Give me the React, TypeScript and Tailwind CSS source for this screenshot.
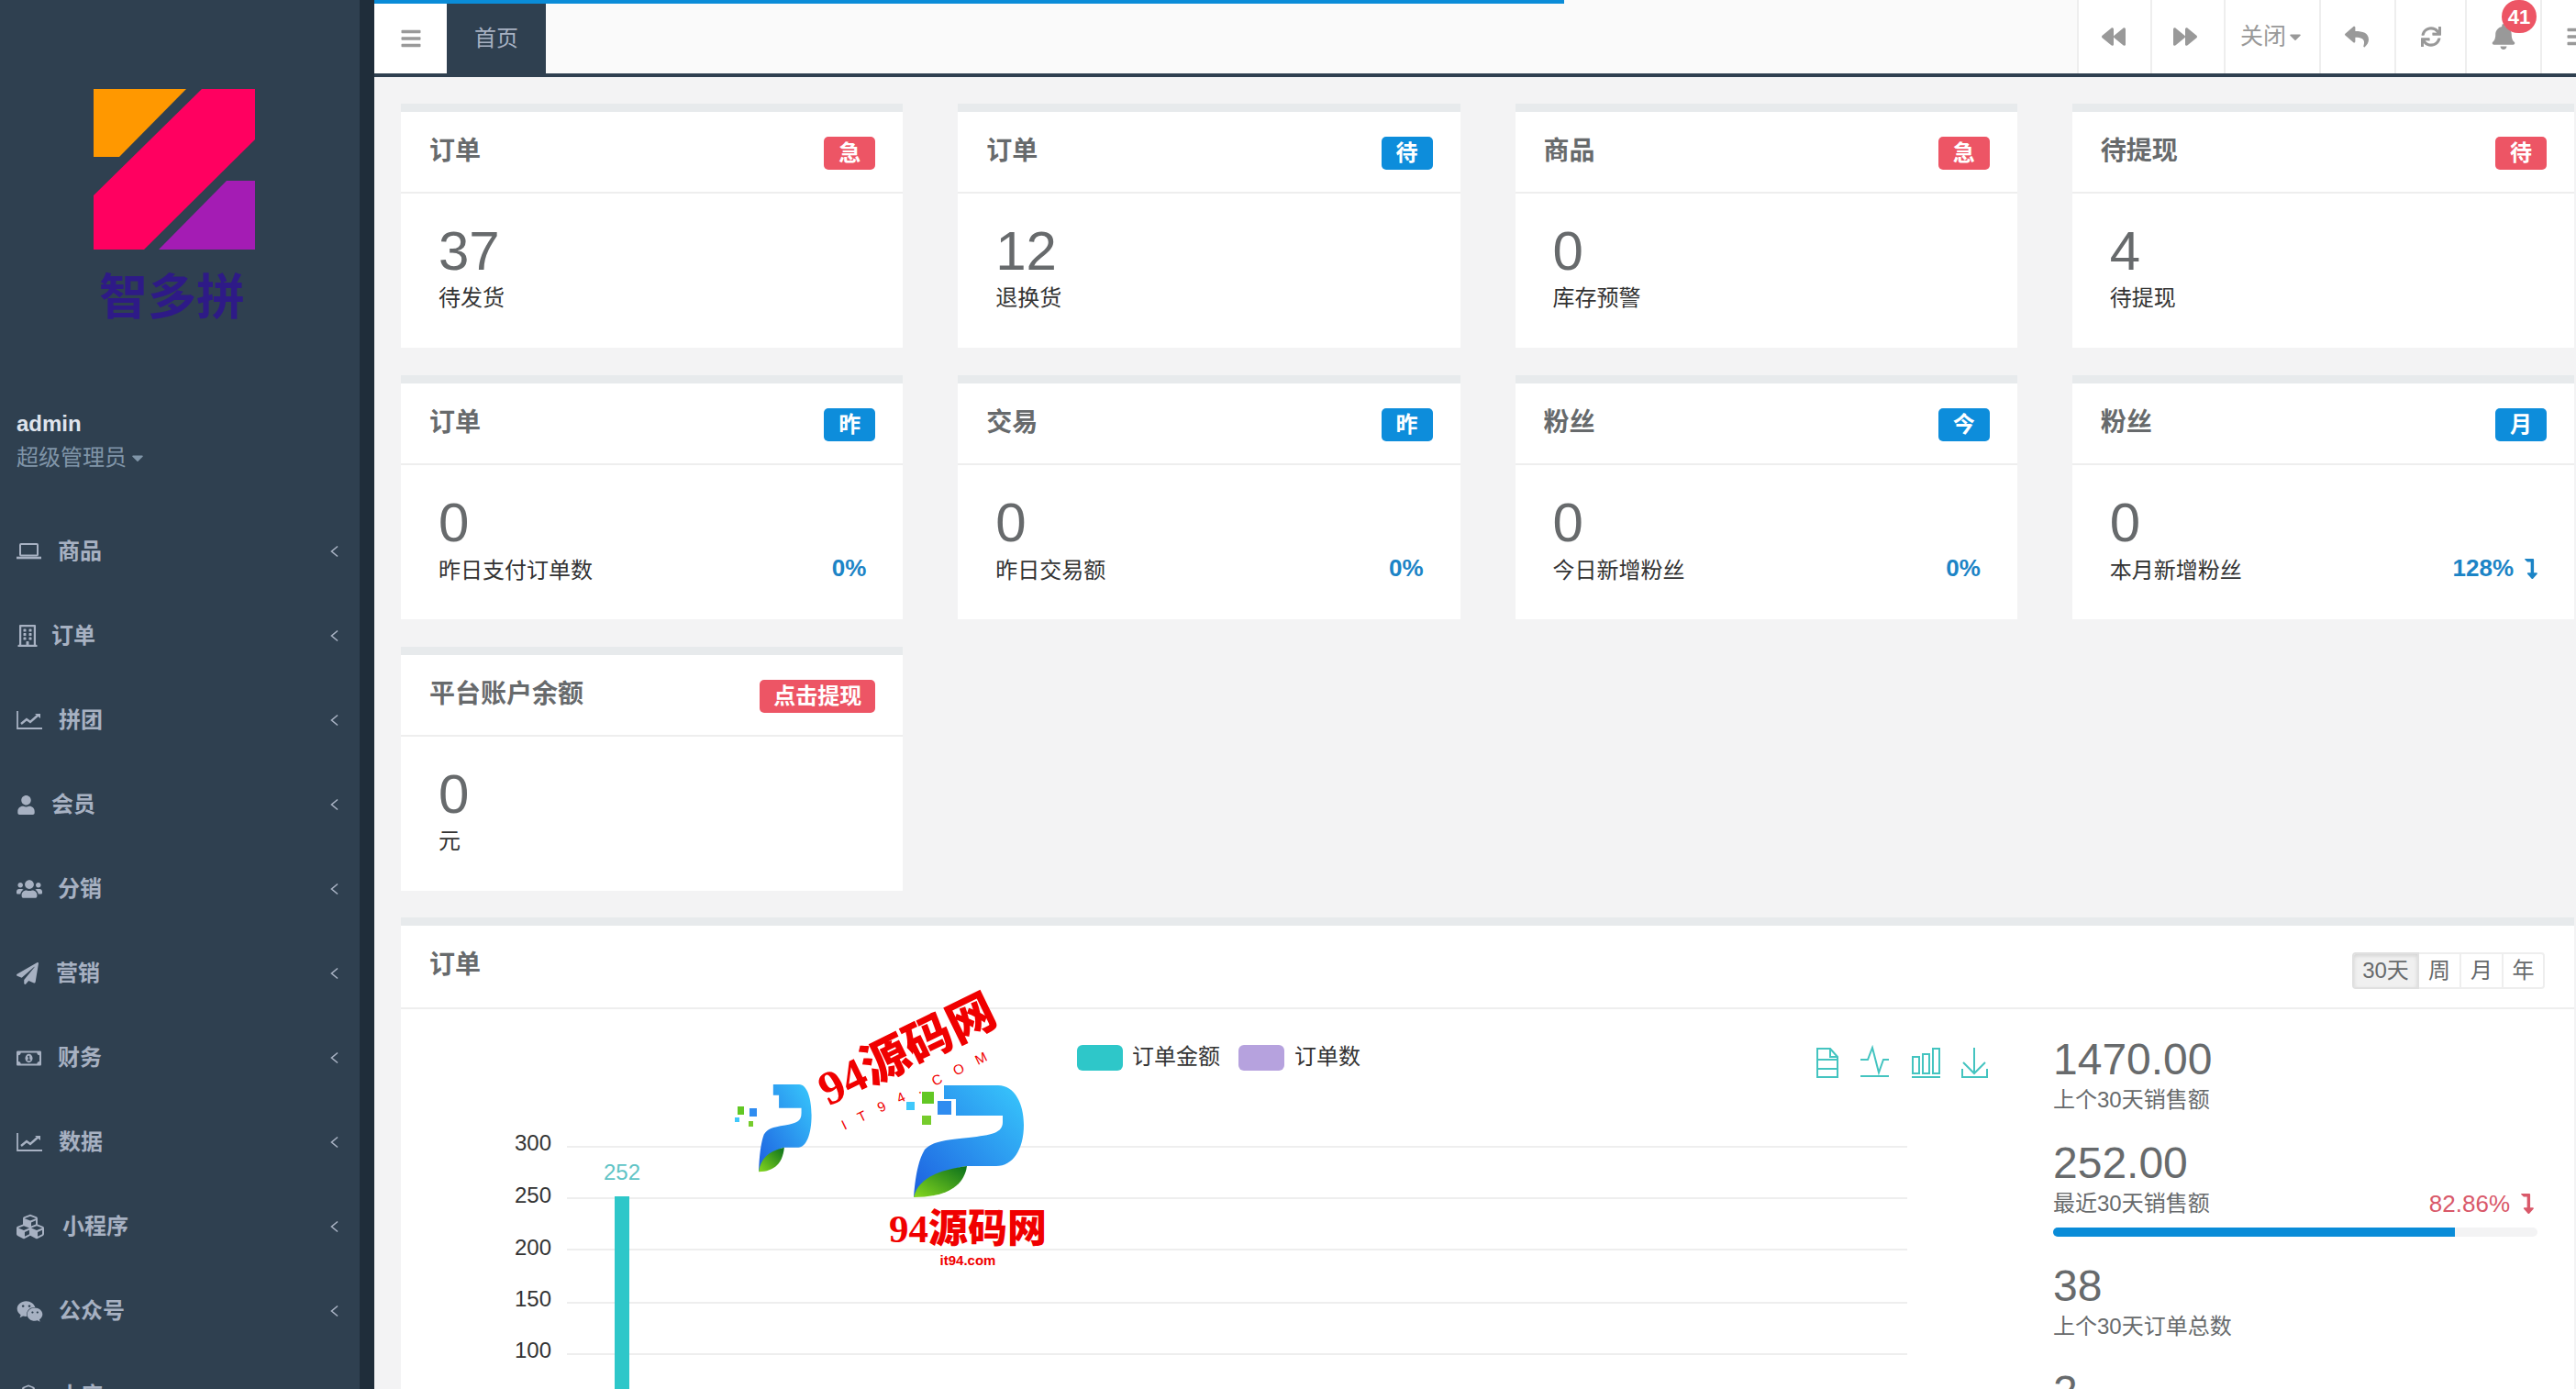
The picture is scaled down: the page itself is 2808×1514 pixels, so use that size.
import React from "react";
import {
  FaBackward, FaForward, FaReply, FaSync, FaBell, FaBars, FaUser, FaUsers, FaPaperPlane,
  FaRegMoneyBillAlt, FaCubes, FaWeixin, FaRegBuilding, FaLevelDownAlt, FaCaretDown,
} from "react-icons/fa";

const Laptop = () => (
  <svg width="27" height="18" viewBox="0 0 27 18" fill="none" stroke="currentColor">
    <rect x="4" y="1" width="19" height="12.5" rx="1" strokeWidth="2" />
    <path d="M0 16h27" strokeWidth="2.6" />
  </svg>
);

const LineChart = () => (
  <svg width="28" height="20" viewBox="0 0 28 20" fill="none" stroke="currentColor">
    <path d="M1 0v19h27" strokeWidth="1.8" />
    <path d="M5 14l6-5 4 3 9-8" strokeWidth="2.4" />
    <path d="M20 3h6v5z" fill="currentColor" stroke="none" />
  </svg>
);

const Chevron = () => (
  <svg width="9" height="14" viewBox="0 0 9 14" fill="none" stroke="currentColor" strokeWidth="1.6">
    <path d="M8 1.5L1.5 7L8 12.5" />
  </svg>
);

type NavItem = { label: string; icon: React.ReactNode; box: string };
const nav: NavItem[] = [
  { label: "商品", icon: <Laptop />, box: "w-[45px]" },
  { label: "订单", icon: <FaRegBuilding size={24} />, box: "w-[38px]" },
  { label: "拼团", icon: <LineChart />, box: "w-[46px]" },
  { label: "会员", icon: <FaUser size={21} />, box: "w-[38px]" },
  { label: "分销", icon: <FaUsers size={28} />, box: "w-[45px]" },
  { label: "营销", icon: <FaPaperPlane size={24} />, box: "w-[43px]" },
  { label: "财务", icon: <FaRegMoneyBillAlt size={27} />, box: "w-[45px]" },
  { label: "数据", icon: <LineChart />, box: "w-[46px]" },
  { label: "小程序", icon: <FaCubes size={30} />, box: "w-[50px]" },
  { label: "公众号", icon: <FaWeixin size={29} />, box: "w-[46px]" },
  { label: "小店", icon: <FaCubes size={26} />, box: "w-[46px]" },
];

function Sidebar() {
  return (
    <aside className="w-[408px] h-[1514px] shrink-0 overflow-hidden bg-[#2f4050] border-r-[16px] border-[#1f2d3a] flex flex-col">
      <div className="pt-[97px] pl-[102px]">
        <svg width="176" height="175" viewBox="102 97 176 175" className="block">
          <path d="M102 97H203L130 171H102Z" fill="#ff9800" />
          <path d="M220 97H278V152L157 272H102V213Z" fill="#ff0060" />
          <path d="M247 197H278V272H173Z" fill="#a41cb4" />
        </svg>
      </div>
      <div className="mt-[28px] pl-[108px] text-[53px] leading-[50px] font-bold text-[#2e1a87] whitespace-nowrap">智多拼</div>
      <div className="mt-[97px] pl-[18px] text-[24px] leading-[30px] font-bold text-[#dfe4ed]">admin</div>
      <div className="mt-[5px] pl-[18px] text-[24px] leading-[34px] text-[#8095a8] flex items-center">
        超级管理员<FaCaretDown size={20} className="ml-[2px]" />
      </div>
      <nav className="mt-[39px] flex flex-col">
        {nav.map((n, i) => (
          <div key={i} className="h-[92px] shrink-0 pl-[18px] pr-[23px] flex items-center text-[#a7b1c2]">
            <span className={`${n.box} shrink-0 flex items-center`}>{n.icon}</span>
            <span className="text-[24px] font-bold flex-1 leading-[32px]">{n.label}</span>
            <Chevron />
          </div>
        ))}
      </nav>
    </aside>
  );
}

const ToolBtn = ({ w, children }: { w: string; children: React.ReactNode }) => (
  <div className={`${w} shrink-0 h-full bg-white border-l-2 border-[#eeeeee] flex items-center justify-center text-[#999999] relative`}>
    {children}
  </div>
);

function TopBar() {
  return (
    <header className="h-[84px] shrink-0 bg-[#fafafa] border-b-4 border-[#2f4050] flex relative overflow-hidden">
      <div className="absolute left-0 top-0 w-[1297px] h-[4px] bg-[#0a8cd8]" />
      <div className="w-[79px] bg-white flex items-center justify-center text-[#999999] mt-[4px]"><FaBars size={24} /></div>
      <div className="w-[108px] bg-[#2f4050] text-[#a7b1c2] text-[24px] flex items-center justify-center mt-[4px]">首页</div>
      <div className="flex-1" />
      <div className="flex h-full w-[544px] shrink-0">
        <ToolBtn w="w-[80px]"><FaBackward size={26} className="-ml-[3px]" /></ToolBtn>
        <ToolBtn w="w-[80px]"><FaForward size={26} className="-ml-[6px]" /></ToolBtn>
        <ToolBtn w="w-[104px]"><span className="text-[25px]">关闭</span><FaCaretDown size={20} /></ToolBtn>
        <ToolBtn w="w-[82px]"><FaReply size={26} className="-ml-[3px]" /></ToolBtn>
        <ToolBtn w="w-[77px]"><FaSync size={22} /></ToolBtn>
        <ToolBtn w="w-[82px]">
          <FaBell size={28} />
          <span className="absolute left-[38px] top-0 w-[38px] h-[36px] rounded-full bg-[#ed5565] text-white text-[22px] font-bold flex items-center justify-center">41</span>
        </ToolBtn>
        <ToolBtn w="w-[80px]"><span className="w-full flex justify-start pl-[26px]"><FaBars size={24} /></span></ToolBtn>
      </div>
    </header>
  );
}

type Stat = { title: string; badge: string; red?: boolean; num: string; label: string; pct?: string; down?: boolean };
const stats: Stat[] = [
  { title: "订单", badge: "急", red: true, num: "37", label: "待发货" },
  { title: "订单", badge: "待", num: "12", label: "退换货" },
  { title: "商品", badge: "急", red: true, num: "0", label: "库存预警" },
  { title: "待提现", badge: "待", red: true, num: "4", label: "待提现" },
  { title: "订单", badge: "昨", num: "0", label: "昨日支付订单数", pct: "0%" },
  { title: "交易", badge: "昨", num: "0", label: "昨日交易额", pct: "0%" },
  { title: "粉丝", badge: "今", num: "0", label: "今日新增粉丝", pct: "0%" },
  { title: "粉丝", badge: "月", num: "0", label: "本月新增粉丝", pct: "128%", down: true },
  { title: "平台账户余额", badge: "点击提现", red: true, num: "0", label: "元" },
];

function Card({ s }: { s: Stat }) {
  return (
    <div className="h-[266px] bg-white border-t-[9px] border-[#e7eaec] flex flex-col">
      <div className="h-[89px] shrink-0 pl-[31px] pr-[30px] flex items-center justify-between border-b-2 border-[#eeeeee]">
        <span className="text-[28px] font-bold text-[#676a6c] -mt-[1px]">{s.title}</span>
        <span className={`${s.red ? "bg-[#ed5565]" : "bg-[#0d8ddb]"} mt-[3px] h-[36px] min-w-[56px] px-[15px] rounded-[5px] text-white text-[24px] font-bold flex items-center justify-center`}>{s.badge}</span>
      </div>
      <div className="pl-[41px] pr-[40px] pt-[33px]">
        <div className="text-[60px] leading-[60px] text-[#676a6c]">{s.num}</div>
        <div className="mt-[5px] flex items-center justify-between">
          <span className="text-[24px] leading-[32px] text-[#333333]">{s.label}</span>
          {s.pct && (
            <span className={`${s.down ? "-mr-[4px]" : ""} text-[26px] font-bold text-[#1c84c6] flex items-center gap-[8px] -mt-[5px]`}>
              {s.pct}{s.down && <FaLevelDownAlt size={22} />}
            </span>
          )}
        </div>
      </div>
    </div>
  );
}

const gridY = [150, 206, 262, 320, 376];
const axis = [["300", 145], ["250", 202], ["200", 259], ["150", 315], ["100", 371]] as const;

function Chart() {
  return (
    <svg width="1801" height="414" viewBox="0 0 1801 414" className="block shrink-0" fontFamily="'Liberation Sans','Noto Sans CJK SC',sans-serif" fontSize="24">
      {gridY.map((y) => <line key={y} x1="181" x2="1642" y1={y} y2={y} stroke="#eeeeee" strokeWidth="2" />)}
      {axis.map(([t, y]) => <text key={t} x="164" y={y + 9} textAnchor="end" fill="#333333">{t}</text>)}
      <rect x="233" y="204" width="16" height="210" fill="#2ec7c9" />
      <text x="241" y="186" textAnchor="middle" fill="#5fc4c6">252</text>
      <rect x="737" y="39" width="50" height="28" rx="6" fill="#2ec7c9" />
      <text x="797" y="60" fill="#333333">订单金额</text>
      <rect x="913" y="39" width="50" height="28" rx="6" fill="#b6a2de" />
      <text x="974" y="60" fill="#333333">订单数</text>
      <g fill="none" stroke="#44c4c0" strokeWidth="2">
        <path d="M1544 43h14l8 9v22h-22zM1558 43v9h8M1544 55h22M1544 65h22" />
        <path d="M1591 55h8l5-13 7 27 5-14h6M1591 73h31" />
        <path d="M1648 52h7v18h-7zM1659 49h7v21h-7zM1670 43h7v27h-7zM1647 74h31" />
        <path d="M1715 42v28M1703 58l12 12 12-12M1702 65v9h27v-9" />
      </g>
    </svg>
  );
}

function ChartCard() {
  return (
    <section className="mt-[29px] bg-white border-t-[9px] border-[#e7eaec]">
      <div className="h-[91px] pl-[31px] pr-[32px] flex items-center justify-between border-b-2 border-[#eeeeee]">
        <span className="text-[28px] font-bold text-[#676a6c] -mt-[3px]">订单</span>
        <div className="flex h-[40px] mt-[8px] text-[24px] text-[#676a6c]">
          <span className="w-[73px] flex items-center justify-center bg-[#f0f0f0] border-2 border-[#e0e0e0] rounded-l-[4px] shadow-[inset_0_2px_4px_rgba(0,0,0,0.12)]">30天</span>
          <span className="w-[46px] flex items-center justify-center border-y-2 border-r-2 border-[#eeeeee]">周</span>
          <span className="w-[46px] flex items-center justify-center border-y-2 border-r-2 border-[#eeeeee]">月</span>
          <span className="w-[45px] flex items-center justify-center border-y-2 border-r-2 border-[#eeeeee] rounded-r-[4px]">年</span>
        </div>
      </div>
      <div className="flex h-[414px] overflow-hidden">
        <Chart />
        <div className="w-[528px] shrink-0 text-[#676a6c]">
          <div className="mt-[30px] text-[48px] leading-[50px]">1470.00</div>
          <div className="mt-[3px] text-[24px] leading-[32px]">上个30天销售额</div>
          <div className="mt-[28px] text-[48px] leading-[50px]">252.00</div>
          <div className="mt-[3px] flex items-center justify-between text-[24px] leading-[32px]">
            <span>最近30天销售额</span>
            <span className="text-[26px] text-[#d9596a] flex items-center gap-[8px] -mt-[1px]">82.86%<FaLevelDownAlt size={22} /></span>
          </div>
          <div className="mt-[10px] h-[10px] rounded-[5px] bg-[#f3f3f4] overflow-hidden">
            <div className="h-full w-[83%] bg-[#0a8cd8]" />
          </div>
          <div className="mt-[29px] text-[48px] leading-[50px]">38</div>
          <div className="mt-[3px] text-[24px] leading-[32px]">上个30天订单总数</div>
          <div className="mt-[30px] text-[48px] leading-[50px]">2</div>
        </div>
      </div>
    </section>
  );
}

const P = ({ id }: { id: string }) => (
  <>
    <path d="M33 0H92C110 0 120 20 120 43C120 70 108 88 90 88H58C40 90 30 100 22 108L0 122C2 95 6 80 12 70C20 62 30 60 60 57C85 54 97 52 97 40V33H46V15H33Z" fill={`url(#${id}b)`} />
    <path d="M58 88C55 110 35 122 0 122C5 100 30 92 58 88Z" fill={`url(#${id}g)`} />
  </>
);

function Watermark() {
  return (
    <svg width="400" height="340" viewBox="780 1060 400 340" className="absolute left-[780px] top-[1060px]" fill="#f00000">
      <defs>
        <linearGradient id="pb" x1="0" y1="1" x2="1" y2="0">
          <stop offset="0" stopColor="#1d5fe0" />
          <stop offset="1" stopColor="#38c8fc" />
        </linearGradient>
        <linearGradient id="pg" x1="0" y1="1" x2="1" y2="0">
          <stop offset="0" stopColor="#86d81e" />
          <stop offset="1" stopColor="#0a6f1c" />
        </linearGradient>
      </defs>
      <g transform="translate(996 1183)"><P id="p" /></g>
      <g transform="translate(827 1182) scale(0.48 0.78)"><P id="p" /></g>
      <rect x="1005" y="1190" width="13" height="13" fill="#62c724" />
      <rect x="1022" y="1200" width="15" height="15" fill="#2f8cf0" />
      <rect x="988" y="1201" width="9" height="9" fill="#3fc8fb" />
      <rect x="1005" y="1216" width="10" height="10" fill="#76cc2c" />
      <rect x="804" y="1206" width="7" height="9" fill="#62c724" />
      <rect x="817" y="1208" width="8" height="9" fill="#2f8cf0" />
      <rect x="801" y="1218" width="5" height="5" fill="#3fc8fb" />
      <rect x="816" y="1222" width="5" height="6" fill="#76cc2c" />
      <text x="989" y="1162" transform="rotate(-26 989 1145)" textAnchor="middle" fontSize="52" fontWeight="900" fontFamily="'Liberation Serif','Noto Sans CJK SC',serif">94源码网</text>
      <text x="1003" y="1191" transform="rotate(-26 1003 1185)" textAnchor="middle" fontSize="15" letterSpacing="15" fontFamily="'Liberation Sans',sans-serif">IT94.COM</text>
      <text x="1055" y="1354" textAnchor="middle" fontSize="43" fontWeight="900" fontFamily="'Liberation Serif','Noto Sans CJK SC',serif">94源码网</text>
      <text x="1055" y="1379" textAnchor="middle" fontSize="15" fontWeight="700" fontFamily="'Liberation Sans',sans-serif">it94.com</text>
    </svg>
  );
}

export default function App() {
  return (
    <div className="relative w-[2808px] h-[1514px] overflow-hidden flex bg-[#f3f3f4] font-['Liberation_Sans','Noto_Sans_CJK_SC',sans-serif]">
      <Sidebar />
      <main className="flex-1 min-w-0 flex flex-col h-[1514px] overflow-hidden">
        <TopBar />
        <div className="pt-[29px] pl-[29px] pr-[2px]">
          <div className="grid grid-cols-4 gap-x-[60px] gap-y-[30px]">
            {stats.map((s, i) => <Card key={i} s={s} />)}
          </div>
          <ChartCard />
        </div>
      </main>
      <Watermark />
    </div>
  );
}
